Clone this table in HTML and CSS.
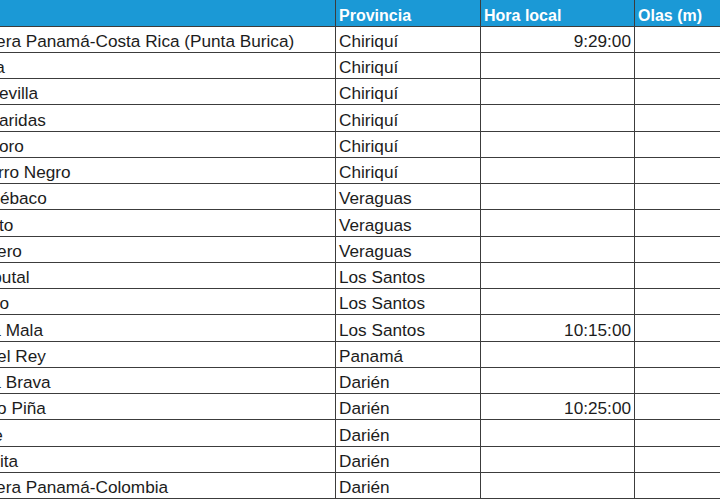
FILE: index.html
```html
<!DOCTYPE html>
<html lang="es">
<head>
<meta charset="utf-8">
<title>Horarios de llegada</title>
<link rel="stylesheet" href="styles.css">
</head>
<body>
<div class="viewport">
<table class="sheet">
<colgroup>
<col class="col-sitio"><col class="col-prov"><col class="col-hora"><col class="col-olas">
</colgroup>
<thead>
<tr><th>Sitio</th><th>Provincia</th><th>Hora local</th><th>Olas (m)</th></tr>
</thead>
<tbody>
<tr><td>Frontera Panamá-Costa Rica (Punta Burica)</td><td>Chiriquí</td><td class="num">9:29:00</td><td></td></tr>
<tr><td>Palma</td><td>Chiriquí</td><td class="num"></td><td></td></tr>
<tr><td>Isla Sevilla</td><td>Chiriquí</td><td class="num"></td><td></td></tr>
<tr><td>Isla Paridas</td><td>Chiriquí</td><td class="num"></td><td></td></tr>
<tr><td>Isla Boro</td><td>Chiriquí</td><td class="num"></td><td></td></tr>
<tr><td>El Cerro Negro</td><td>Chiriquí</td><td class="num"></td><td></td></tr>
<tr><td>Isla Cébaco</td><td>Veraguas</td><td class="num"></td><td></td></tr>
<tr><td>Mariato</td><td>Veraguas</td><td class="num"></td><td></td></tr>
<tr><td>Quintero</td><td>Veraguas</td><td class="num"></td><td></td></tr>
<tr><td>Cambutal</td><td>Los Santos</td><td class="num"></td><td></td></tr>
<tr><td>El Toro</td><td>Los Santos</td><td class="num"></td><td></td></tr>
<tr><td>Punta Mala</td><td>Los Santos</td><td class="num">10:15:00</td><td></td></tr>
<tr><td>Isla del Rey</td><td>Panamá</td><td class="num"></td><td></td></tr>
<tr><td>Punta Brava</td><td>Darién</td><td class="num"></td><td></td></tr>
<tr><td>Puerto Piña</td><td>Darién</td><td class="num">10:25:00</td><td></td></tr>
<tr><td>Jaque</td><td>Darién</td><td class="num"></td><td></td></tr>
<tr><td>Cocalita</td><td>Darién</td><td class="num"></td><td></td></tr>
<tr><td>Frontera Panamá-Colombia</td><td>Darién</td><td class="num"></td><td></td></tr>
</tbody>
</table>
</div>
</body>
</html>
```
FILE: styles.css
```css
html, body {
  margin: 0;
  padding: 0;
  background: #ffffff;
}
.viewport {
  width: 720px;
  height: 500px;
  overflow: hidden;
}
.sheet {
  border-collapse: collapse;
  table-layout: fixed;
  width: 813px;
  margin-left: -48px;
  font-family: "Liberation Sans", Arial, sans-serif;
  color: #1c1c1c;
}
.col-sitio { width: 383px; }
.col-prov { width: 145px; }
.col-hora { width: 154px; }
.col-olas { width: 131px; }
.sheet th {
  background: #1b99d6;
  color: #ffffff;
  font-weight: bold;
  font-size: 16px;
  text-align: left;
  vertical-align: bottom;
  padding: 0 3px 1px;
  height: 26px;
  box-sizing: border-box;
  border: 1px solid #3c3c3c;
  border-top: none;
  white-space: nowrap;
  overflow: hidden;
}
.sheet td {
  font-size: 17.2px;
  vertical-align: bottom;
  padding: 0 3px 0;
  height: 26.28px;
  box-sizing: border-box;
  border: 1px solid #3c3c3c;
  white-space: nowrap;
  overflow: hidden;
}
.sheet td.num {
  text-align: right;
}
```
